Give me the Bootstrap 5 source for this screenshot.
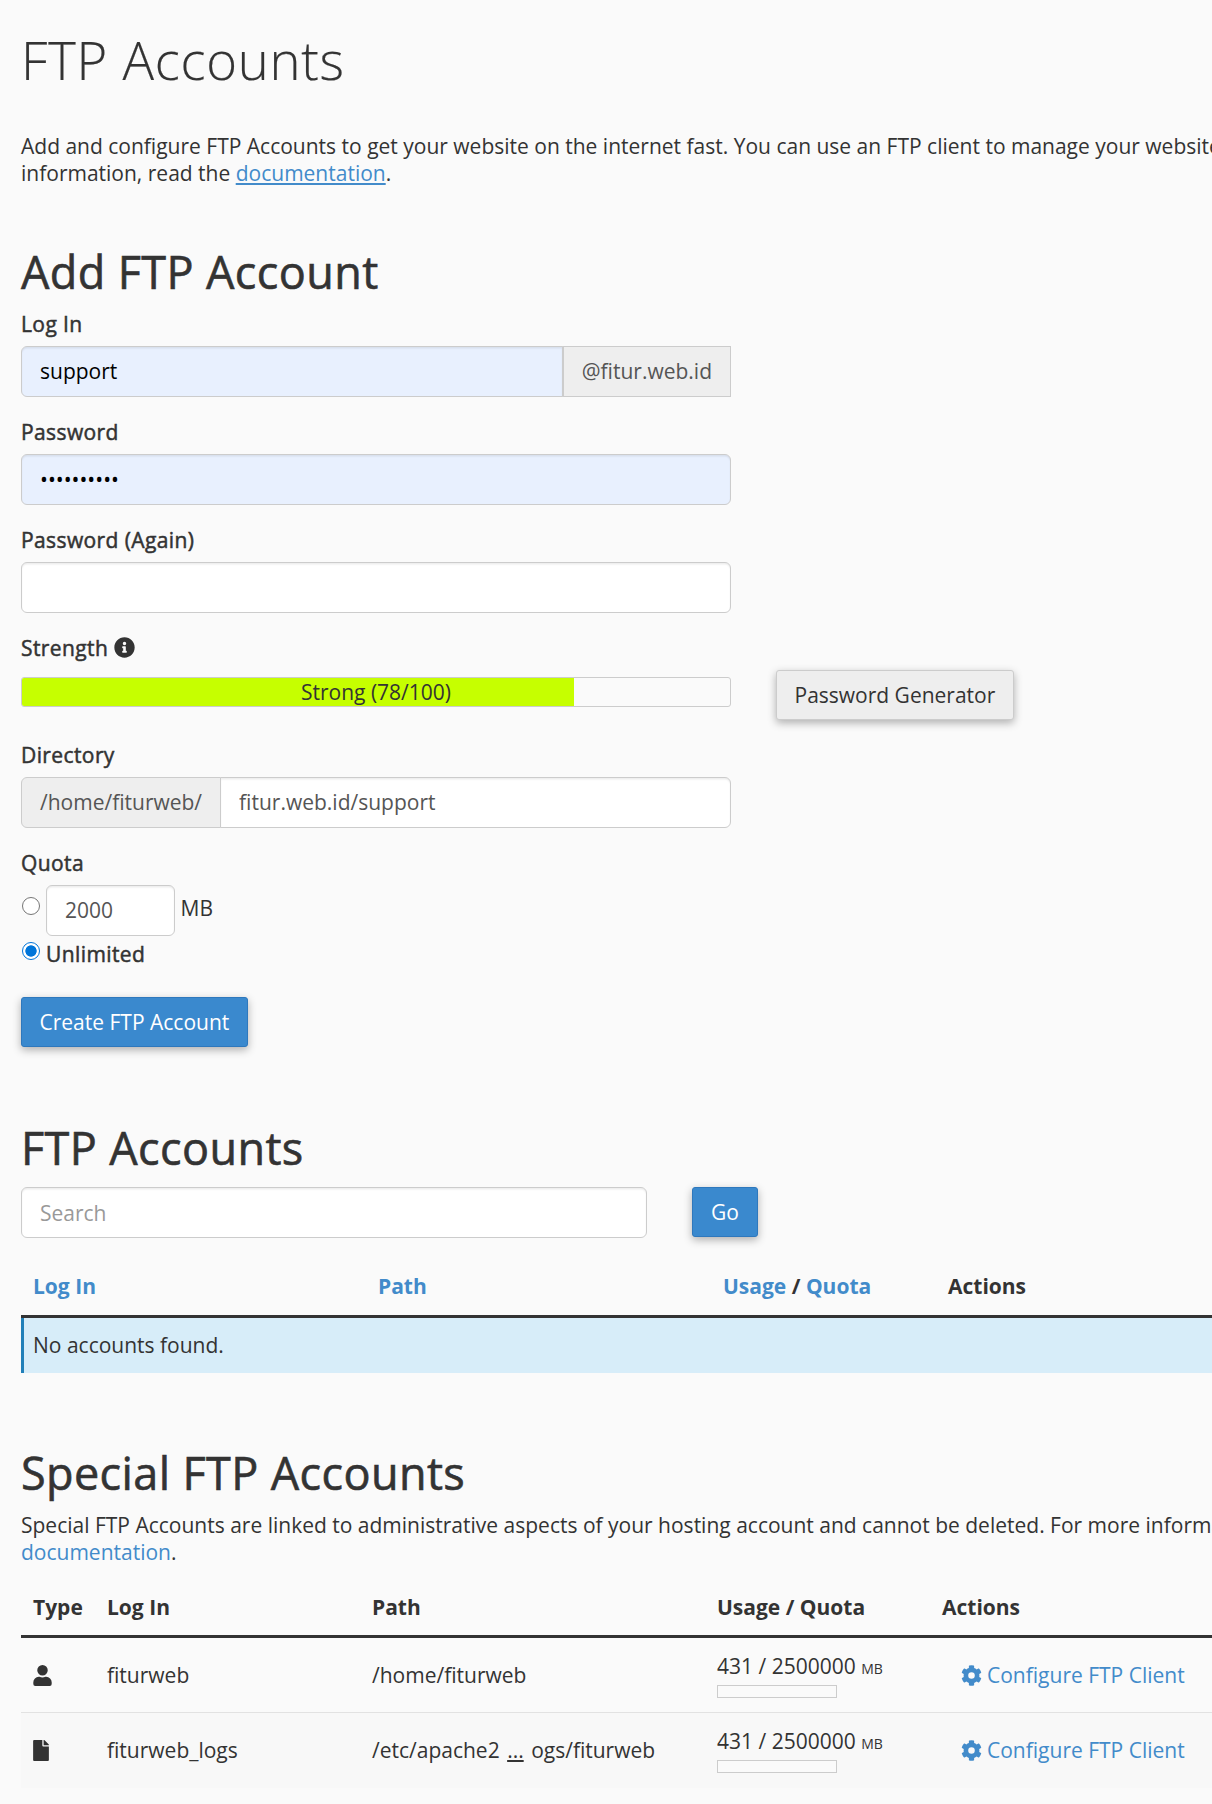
<!DOCTYPE html>
<html lang="en">
<head>
<meta charset="utf-8">
<meta name="viewport" content="width=device-width, initial-scale=1">
<title>FTP Accounts</title>
<link href="https://cdn.jsdelivr.net/npm/bootstrap@5.3.0/dist/css/bootstrap.min.css" rel="stylesheet">
<style>
body{background:#fafafa;color:#333;font:400 21px/27.3px "Open Sans","Noto Sans",sans-serif;overflow:hidden}
.page-shell{padding:31px 0 0 21px;height:1804px;overflow:hidden}
a{color:#428bca;text-decoration:none}
.doc-link{text-decoration:underline}
h1{font-size:52.5px;font-weight:300;line-height:58px;margin:0 0 44px;letter-spacing:.78px;-webkit-text-stroke:.2px #333}
h2{font-size:45px;font-weight:400;line-height:49.5px;margin:0 0 14px;letter-spacing:.38px;-webkit-text-stroke:.6px #333}
p{margin:0;white-space:nowrap}
.intro{margin-bottom:60.2px;line-height:27px}
.form-area{width:710px}
.form-label{font-weight:400;letter-spacing:.4px;-webkit-text-stroke:.5px #333;margin:0 0 7.7px;display:block;line-height:27.3px}
.field-group{margin-bottom:22px}
.form-control,.input-group-text{height:51px;font-size:21px;line-height:27.3px;padding:9px 18px;border:1px solid #ccc;color:#555;border-radius:6px}
.form-control{background:#fff;box-shadow:inset 0 1.5px 1.5px rgba(0,0,0,.075)}
.form-control::placeholder{color:#999}
.form-control.autofilled{background:#e8f0fe;color:#000}
.input-group-text{background:#eee}
.input-group .suffix-text{border-radius:0;border-left-width:2px}
.strength-label svg{margin-left:6px;margin-bottom:1px}
.strength-row{margin:8.2px 0 21px;height:50.8px}
.strength-meter{flex:none;width:710px;height:30px;margin-top:7px;border:1px solid #ccc;border-radius:3px;background:#fafafa;position:relative;overflow:hidden}
.strength-fill{height:100%;background:#c6ff00}
.strength-text{position:absolute;inset:0;line-height:28px;text-align:center}
.btn{font-size:21px;line-height:27.3px;height:50px;padding:1px 17.5px 0;border-radius:3px;box-shadow:0 3px 8px rgba(0,0,0,.3);white-space:nowrap}
.btn-soft,.btn-soft:hover{background:#eee;border-color:#ccc;color:#333}
.btn-primary{background:#3a89ce;border-color:#2e78bd}
.gen-button{margin-left:45px}
.quota-input{width:129px}
.quota-radio{appearance:none;width:18px;height:18px;border:1.5px solid #767676;border-radius:50%;background:#fff;margin:0 6px 0 1px;flex:none}
.quota-radio:checked{border-color:#0075d9;background:radial-gradient(circle,#0075d9 5.3px,#fff 6px)}
.quota-line .quota-radio{margin-top:12px}
.mb-text{margin:10px 0 0 5.5px}
.unlimited-line{margin:5px 0 29px;height:27px}
.unlimited-line .quota-radio{margin-top:1px}
.list-title{margin-top:76px;margin-bottom:14.8px}
.search-input{width:626px;margin-right:45px}
.search-line .btn{padding:1px 18px 0}
.first-grid{margin-top:35px}
.special-title{margin-top:75px;margin-bottom:15px}
.second-grid{margin-top:27px}
.data-grid{width:1400px;table-layout:fixed;border-collapse:separate;border-spacing:0}
.data-grid th{font-weight:700;padding:0 12px;height:45px;border-bottom:3px solid #333;vertical-align:top}
.second-grid th{height:44px}
.data-grid td{padding:0 12px;vertical-align:middle}
.data-grid .notice-cell{height:54.5px;background:#d7edf9;border-left:3px solid #2180b9;padding-left:9px}
.account-row td{height:75px;border-bottom:1px solid #e2e2e2;padding-top:1.5px}
.account-row:last-child td{background:#f8f8f8;border-bottom-color:#f8f8f8}
.path-gap{margin:0 2px 0 2px}
.unit-text{font-size:14px}
.usage-box{width:120px;height:13px;border:1px solid #ccc;background:#fafafa;margin-top:2.5px}
.config-link{padding-left:19px;gap:5px}
svg{fill:currentColor;display:block}
</style>
</head>
<body>
<main class="page-shell">
<h1>FTP Accounts</h1>
<p class="intro">Add and configure FTP Accounts to get your website on the internet fast. You can use an FTP client to manage your website<br>information, read the <a class="doc-link" href="#">documentation</a>.</p>

<h2>Add FTP Account</h2>
<form>
<div class="form-area">
<div class="field-group"><label class="form-label">Log In</label>
<div class="input-group flex-nowrap"><input class="form-control autofilled" value="support"><span class="input-group-text suffix-text">@fitur.web.id</span></div></div>
<div class="field-group"><label class="form-label">Password</label><input type="password" class="form-control autofilled" value="abcdefghij"></div>
<div class="field-group"><label class="form-label">Password (Again)</label><input type="password" class="form-control"></div>
</div>
<label class="form-label d-flex align-items-center mb-0 strength-label">Strength
<svg width="21" height="21" viewBox="0 0 512 512"><path d="M256 8C119 8 8 119 8 256s111 248 248 248 248-111 248-248S393 8 256 8zm0 110a42 42 0 1 1 0 84 42 42 0 0 1 0-84zm56 254a12 12 0 0 1-12 12h-88a12 12 0 0 1-12-12v-24a12 12 0 0 1 12-12h12v-64h-12a12 12 0 0 1-12-12v-24a12 12 0 0 1 12-12h64a12 12 0 0 1 12 12v100h12a12 12 0 0 1 12 12z"/></svg></label>
<div class="strength-row d-flex align-items-start">
<div class="strength-meter"><div class="strength-fill" style="width:78%"></div><div class="strength-text">Strong (78/100)</div></div>
<button type="button" class="btn btn-soft gen-button">Password Generator</button>
</div>
<div class="form-area">
<div class="field-group"><label class="form-label">Directory</label>
<div class="input-group flex-nowrap"><span class="input-group-text">/home/fiturweb/</span><input class="form-control" value="fitur.web.id/support"></div></div>
<label class="form-label">Quota</label>
<div class="d-flex quota-line"><input type="radio" name="quota" class="quota-radio"><input class="form-control quota-input" value="2000"><span class="mb-text">MB</span></div>
<div class="d-flex unlimited-line"><input type="radio" name="quota" class="quota-radio" checked><label class="form-label m-0">Unlimited</label></div>
<button type="button" class="btn btn-primary">Create FTP Account</button>
</div>
</form>

<h2 class="list-title">FTP Accounts</h2>
<div class="d-flex search-line"><input class="form-control search-input" placeholder="Search"><button type="button" class="btn btn-primary">Go</button></div>
<table class="data-grid first-grid">
<colgroup><col style="width:345px"><col style="width:345px"><col style="width:225px"><col></colgroup>
<thead><tr><th><a href="#">Log In</a></th><th><a href="#">Path</a></th><th><a href="#">Usage</a> / <a href="#">Quota</a></th><th>Actions</th></tr></thead>
<tbody><tr><td colspan="4" class="notice-cell">No accounts found.</td></tr></tbody>
</table>

<h2 class="special-title">Special FTP Accounts</h2>
<p>Special FTP Accounts are linked to administrative aspects of your hosting account and cannot be deleted. For more information,<br><a href="#">documentation</a>.</p>
<table class="data-grid second-grid">
<colgroup><col style="width:74px"><col style="width:265px"><col style="width:345px"><col style="width:225px"><col></colgroup>
<thead><tr><th>Type</th><th>Log In</th><th>Path</th><th>Usage / Quota</th><th>Actions</th></tr></thead>
<tbody>
<tr class="account-row"><td><svg width="19" height="21" viewBox="0 0 448 512"><path d="M224 256a128 128 0 1 0 0-256 128 128 0 1 0 0 256zm90 32h-17a174 174 0 0 1-146 0h-17A134 134 0 0 0 0 422v42a48 48 0 0 0 48 48h352a48 48 0 0 0 48-48v-42a134 134 0 0 0-134-134z"/></svg></td><td>fiturweb</td><td>/home/fiturweb</td><td>431 / 2500000 <span class="unit-text">MB</span><div class="usage-box"></div></td><td><a href="#" class="d-flex align-items-center config-link"><svg width="21" height="21" viewBox="0 0 512 512"><path d="M487 316l-42-25a192 192 0 0 0 0-70l42-25c5-3 7-9 6-14a249 249 0 0 0-55-94c-4-4-10-5-15-2l-42 24a188 188 0 0 0-61-35V26c0-6-4-11-9-12a251 251 0 0 0-110 0c-5 1-9 6-9 12v49a194 194 0 0 0-61 35L89 86c-5-3-11-2-15 2a248 248 0 0 0-55 94c-1 5 1 11 6 14l42 25a192 192 0 0 0 0 70l-42 25c-5 3-7 9-6 14a249 249 0 0 0 55 94c4 4 10 5 15 2l42-24a188 188 0 0 0 61 35v49c0 6 4 11 9 12a251 251 0 0 0 110 0c5-1 9-6 9-12v-49a194 194 0 0 0 61-35l42 24c5 3 11 2 15-2a248 248 0 0 0 55-94c1-5-1-11-6-14zM256 336a80 80 0 1 1 0-160 80 80 0 0 1 0 160z"/></svg><span>Configure FTP Client</span></a></td></tr>
<tr class="account-row"><td><svg width="16" height="21" viewBox="0 0 384 512"><path d="M224 136V0H24A24 24 0 0 0 0 24v464a24 24 0 0 0 24 24h336a24 24 0 0 0 24-24V160H248a24 24 0 0 1-24-24zm160-14v6H256V0h6c6 0 12 3 17 7l98 98c4 5 7 11 7 17z"/></svg></td><td>fiturweb_logs</td><td>/etc/apache2 <u class="path-gap">...</u> ogs/fiturweb</td><td>431 / 2500000 <span class="unit-text">MB</span><div class="usage-box"></div></td><td><a href="#" class="d-flex align-items-center config-link"><svg width="21" height="21" viewBox="0 0 512 512"><path d="M487 316l-42-25a192 192 0 0 0 0-70l42-25c5-3 7-9 6-14a249 249 0 0 0-55-94c-4-4-10-5-15-2l-42 24a188 188 0 0 0-61-35V26c0-6-4-11-9-12a251 251 0 0 0-110 0c-5 1-9 6-9 12v49a194 194 0 0 0-61 35L89 86c-5-3-11-2-15 2a248 248 0 0 0-55 94c-1 5 1 11 6 14l42 25a192 192 0 0 0 0 70l-42 25c-5 3-7 9-6 14a249 249 0 0 0 55 94c4 4 10 5 15 2l42-24a188 188 0 0 0 61 35v49c0 6 4 11 9 12a251 251 0 0 0 110 0c5-1 9-6 9-12v-49a194 194 0 0 0 61-35l42 24c5 3 11 2 15-2a248 248 0 0 0 55-94c1-5-1-11-6-14zM256 336a80 80 0 1 1 0-160 80 80 0 0 1 0 160z"/></svg><span>Configure FTP Client</span></a></td></tr>
</tbody></table>
</main>
<script src="https://cdn.jsdelivr.net/npm/bootstrap@5.3.0/dist/js/bootstrap.bundle.min.js"></script>
</body>
</html>
